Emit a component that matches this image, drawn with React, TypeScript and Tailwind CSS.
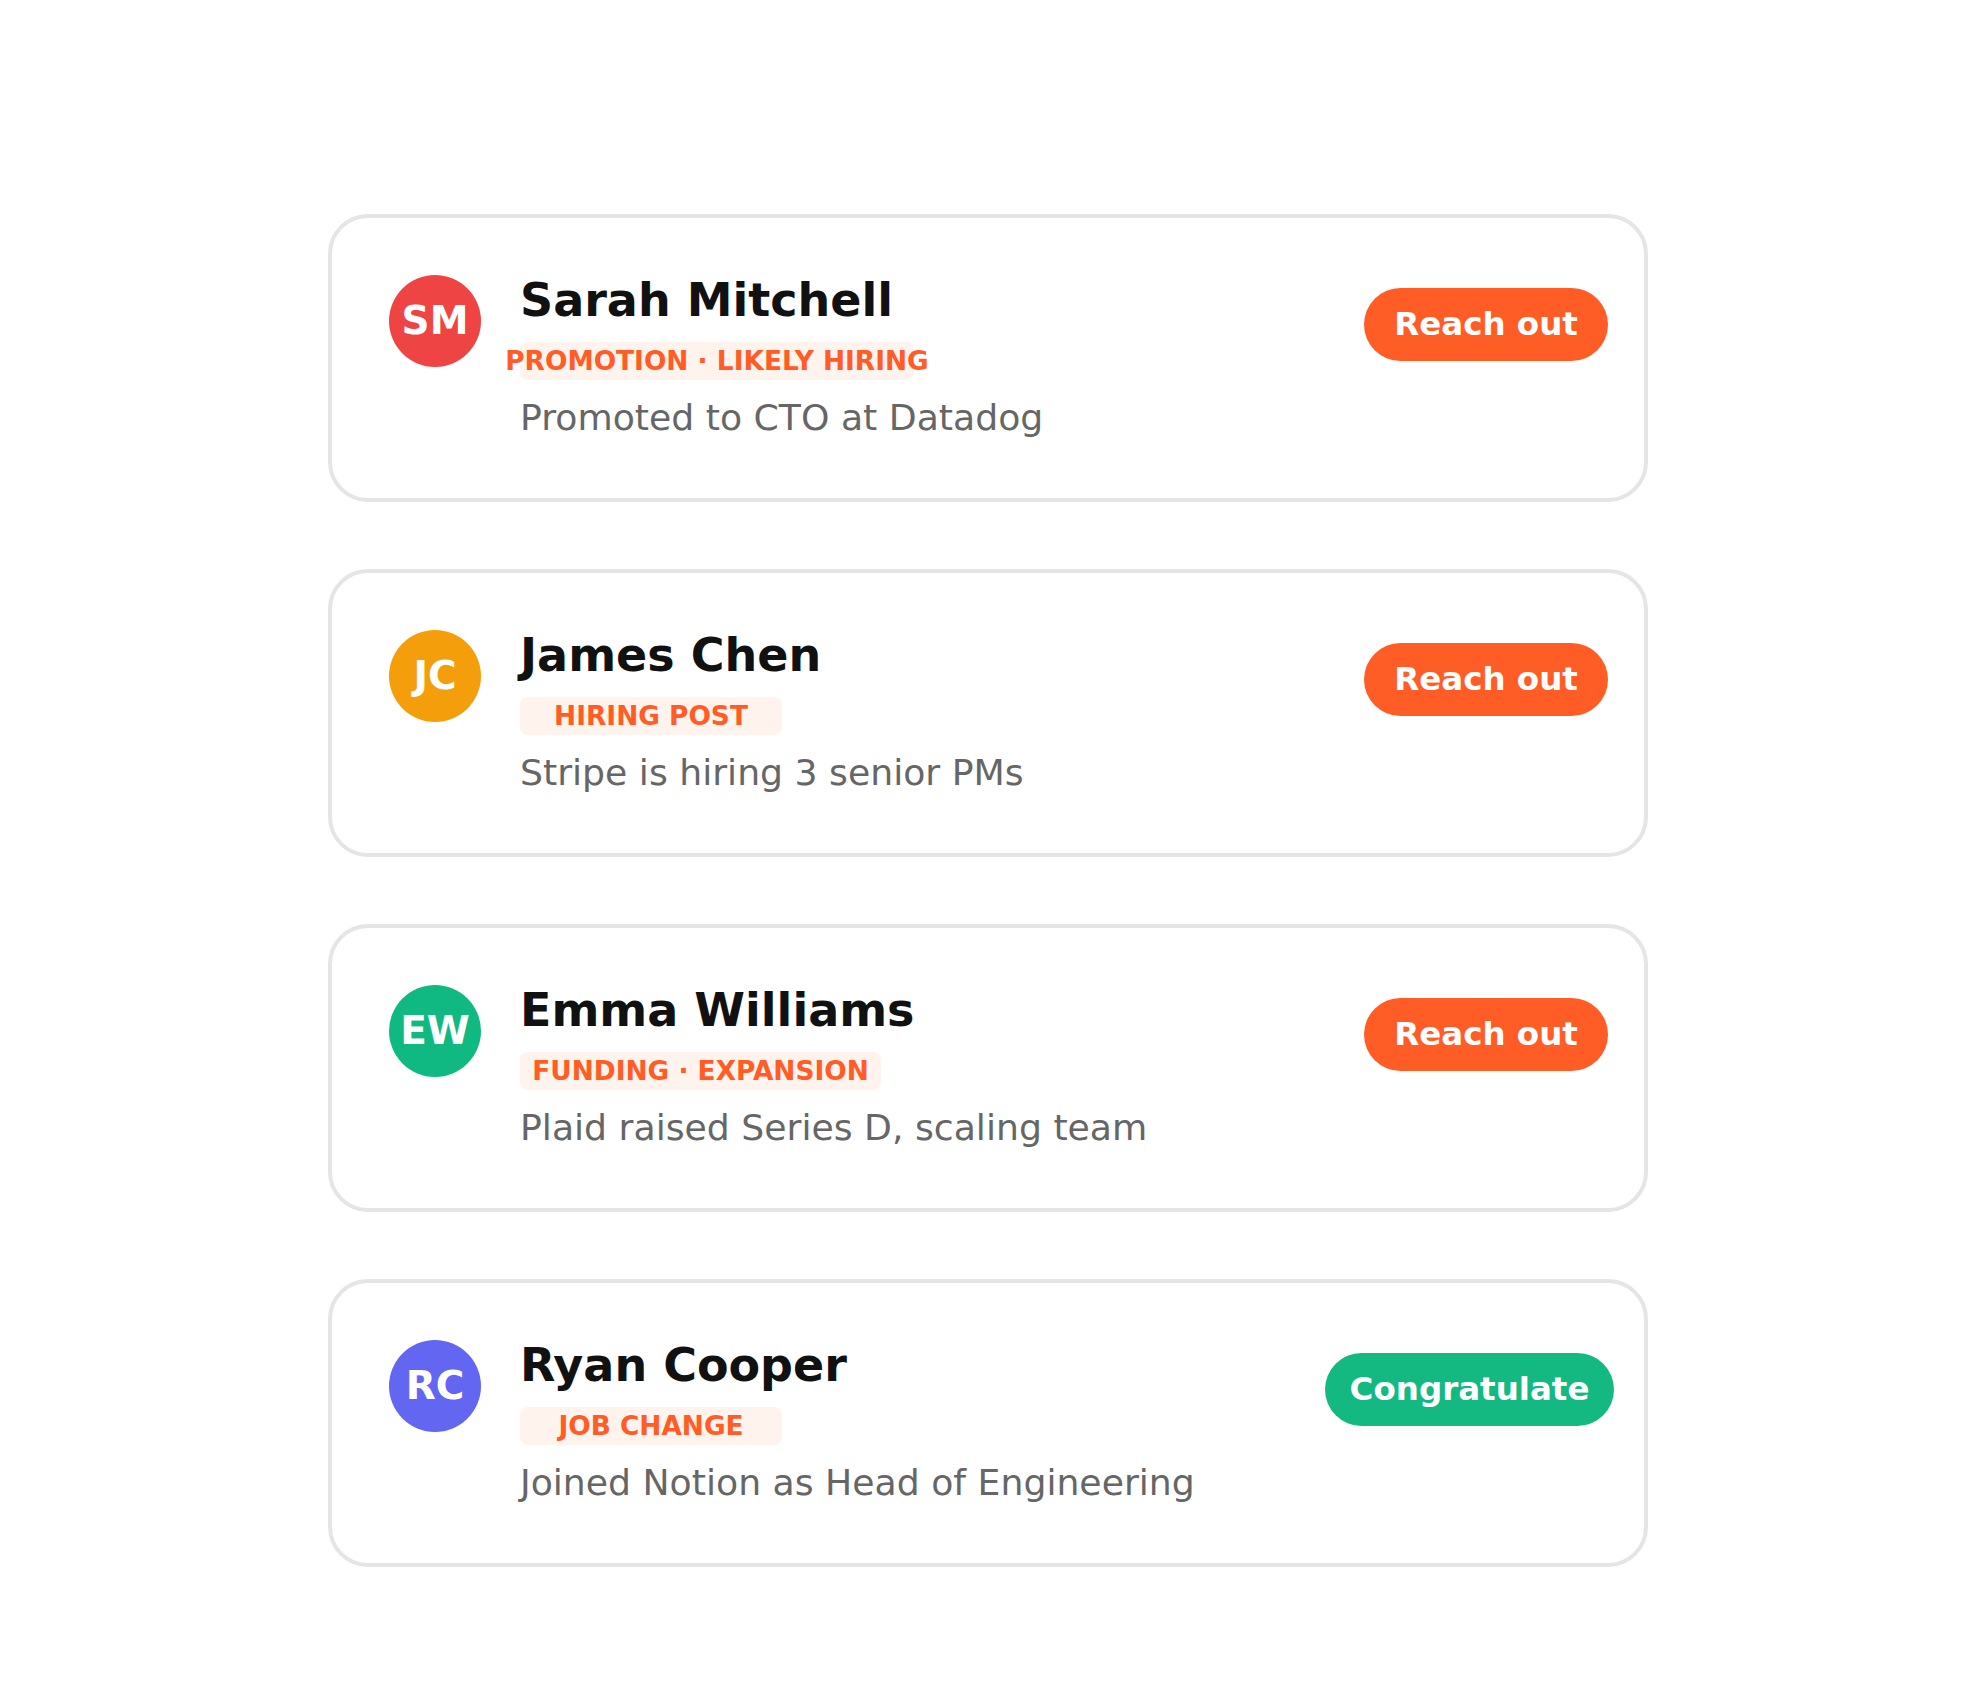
const SIGNALS = [
  {
    initials: "SM",
    name: "Sarah Mitchell",
    tag: "PROMOTION · LIKELY HIRING",
    tagWidth: "w-[394px]",
    detail: "Promoted to CTO at Datadog",
    avatar: "bg-[#ef4444]",
    action: "Reach out",
    button: "w-[244px] mr-[36px] bg-[#ff5c26]",
  },
  {
    initials: "JC",
    name: "James Chen",
    tag: "HIRING POST",
    tagWidth: "w-[262px]",
    detail: "Stripe is hiring 3 senior PMs",
    avatar: "bg-[#f59e0b]",
    action: "Reach out",
    button: "w-[244px] mr-[36px] bg-[#ff5c26]",
  },
  {
    initials: "EW",
    name: "Emma Williams",
    tag: "FUNDING · EXPANSION",
    tagWidth: "w-[361px]",
    detail: "Plaid raised Series D, scaling team",
    avatar: "bg-[#10b981]",
    action: "Reach out",
    button: "w-[244px] mr-[36px] bg-[#ff5c26]",
  },
  {
    initials: "RC",
    name: "Ryan Cooper",
    tag: "JOB CHANGE",
    tagWidth: "w-[262px]",
    detail: "Joined Notion as Head of Engineering",
    avatar: "bg-[#6366f1]",
    action: "Congratulate",
    button: "w-[289px] mr-[30px] bg-[#13b981]",
  },
];

export default function App() {
  return (
    <div className="min-h-[1684px] w-full bg-white pt-[214px] font-['DejaVu_Sans',sans-serif]">
      <div className="mx-auto flex w-[1320px] flex-col gap-[67px]">
        {SIGNALS.map(s => (
          <div
            key={s.name}
            className="flex h-[288px] items-start rounded-[40px] border-4 border-[#e5e5e5] bg-white pl-[57px] pt-[55px]"
          >
            <div
              className={`mt-[2px] flex h-[92px] w-[92px] shrink-0 items-center justify-center rounded-full text-[39px] font-bold text-white ${s.avatar}`}
            >
              {s.initials}
            </div>
            <div className="ml-[39px] flex flex-1 flex-col items-start">
              <p className="text-[46px] font-bold leading-[54px] text-[#111111]">{s.name}</p>
              <div
                className={`mt-[15px] flex h-[38px] items-center justify-center whitespace-nowrap rounded-[8px] bg-[#fff3ee] text-[26.4px] font-bold leading-[38px] text-[#ff5c26] ${s.tagWidth}`}
              >
                {s.tag}
              </div>
              <p className="mt-[17px] text-[36.2px] leading-[42px] text-[#666666]">{s.detail}</p>
            </div>
            <button
              className={`mt-[15px] flex h-[73px] shrink-0 items-center justify-center rounded-full text-[32.5px] font-bold text-white ${s.button}`}
            >
              {s.action}
            </button>
          </div>
        ))}
      </div>
    </div>
  );
}
